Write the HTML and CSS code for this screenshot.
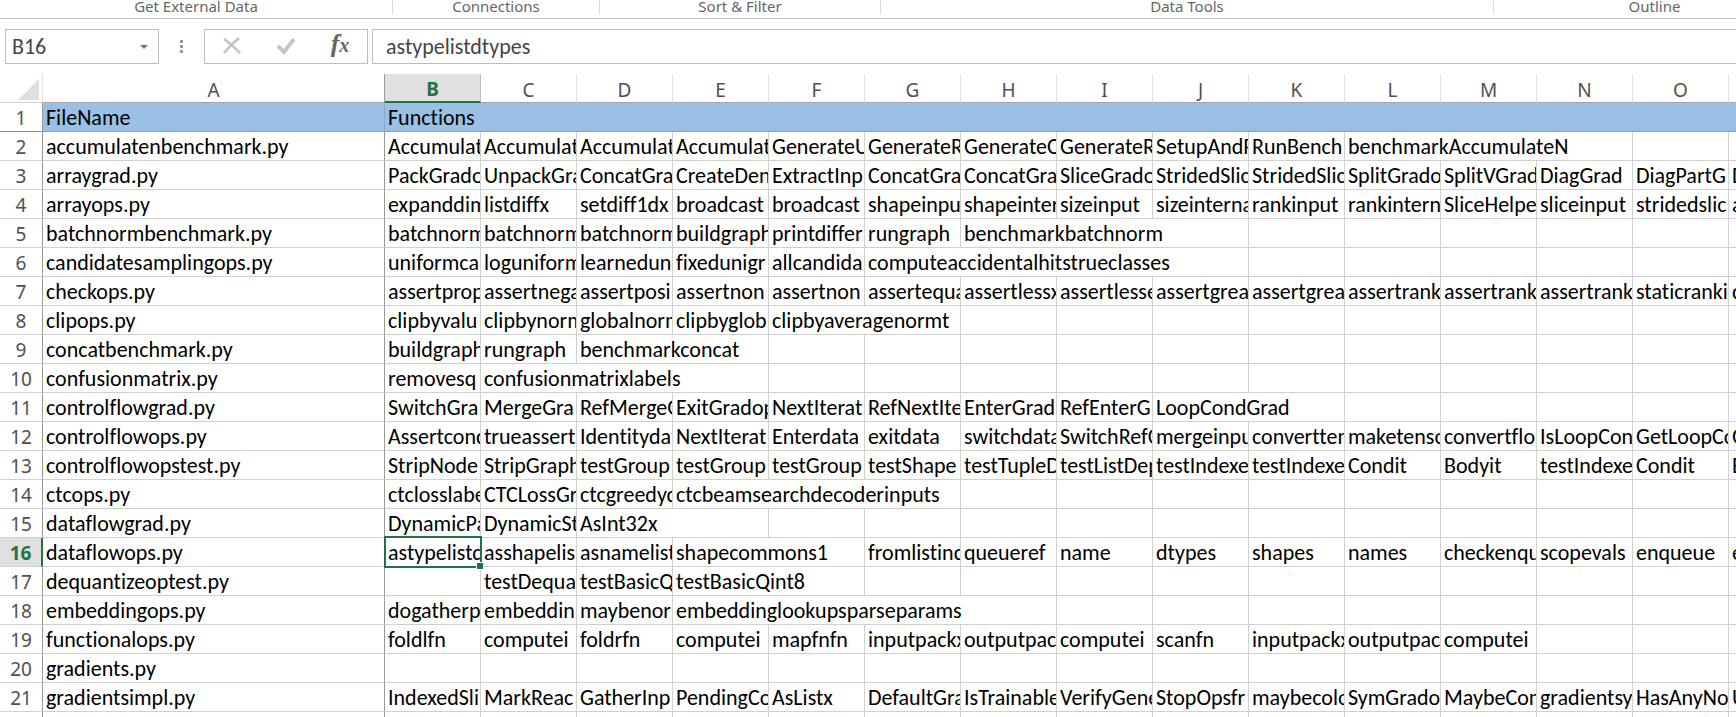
FILE: index.html
```
<!DOCTYPE html>
<html lang="en">
<head>
<meta charset="utf-8">
<title>Workbook</title>
<link rel="stylesheet" href="styles.css">
</head>
<body>
<header class="ribbon">
  <div class="group external">Get External Data</div>
  <div class="group connections">Connections</div>
  <div class="group sort">Sort &amp; Filter</div>
  <div class="group tools">Data Tools</div>
  <div class="group outline">Outline</div>
</header>

<div class="formula-bar">
  <div class="name-box">
    <input class="name-input" type="text" value="B16" aria-label="Name box">
    <button class="name-arrow" type="button" aria-label="Show names"><svg width="8" height="4" viewBox="0 0 8 4"><path d="M0 0h8L4 4z" fill="#777"/></svg></button>
  </div>
  <svg class="grip" width="4" height="14" viewBox="0 0 4 14" fill="#999"><path d="M0 0h3v3H0zM0 5h3v3H0zM0 10h3v3H0z"/></svg>
  <div class="actions">
    <button type="button" aria-label="Cancel"><svg width="20" height="20" viewBox="0 0 20 20" fill="none" stroke="#c3c3c3" stroke-width="2.6"><path d="M2 2c5 3 10 8 16 14M17 1C12 5 7 10 2 16"/></svg></button>
    <button type="button" aria-label="Enter"><svg width="20" height="20" viewBox="0 0 20 20" fill="none" stroke="#c6c6c6" stroke-width="4"><path d="M2 9l6 6L18 2"/></svg></button>
    <button type="button" class="fx" aria-label="Insert function"><i class="fx-f">f</i><i class="fx-x">x</i></button>
  </div>
  <input class="formula" type="text" value="astypelistdtypes" aria-label="Formula bar">
</div>

<main class="sheet">
<table class="grid">
<colgroup><col class="col-num"><col class="col-a"><col span="14" class="col"><col></colgroup>
<thead>
<tr><th class="corner"><svg width="21" height="21" viewBox="0 0 21 21"><path d="M21 0v21H0z" fill="#dfdfdf"/></svg></th><th class="first">A</th><th class="active">B</th><th>C</th><th>D</th><th>E</th><th>F</th><th>G</th><th>H</th><th>I</th><th>J</th><th>K</th><th>L</th><th>M</th><th>N</th><th>O</th><th></th></tr>
</thead>
<tbody>
<tr class="title"><th>1</th><td class="file">FileName</td><td colspan="15">Functions</td></tr>
<tr><th>2</th><td class="file">accumulatenbenchmark.py</td><td>AccumulateN</td><td>AccumulateN</td><td>AccumulateN</td><td>AccumulateN</td><td>GenerateUn</td><td>GenerateRa</td><td>GenerateOr</td><td>GenerateRe</td><td>SetupAndRun</td><td>RunBench</td><td colspan="3">benchmarkAccumulateN</td><td></td><td></td></tr>
<tr><th>3</th><td class="file">arraygrad.py</td><td>PackGradop</td><td>UnpackGrad</td><td>ConcatGrad</td><td>CreateDense</td><td>ExtractInp</td><td>ConcatGrad</td><td>ConcatGrad</td><td>SliceGradop</td><td>StridedSlice</td><td>StridedSlice</td><td>SplitGradop</td><td>SplitVGrad</td><td>DiagGrad</td><td>DiagPartG</td><td>Diag</td></tr>
<tr><th>4</th><td class="file">arrayops.py</td><td>expanddims</td><td>listdiffx</td><td>setdiff1dx</td><td>broadcast</td><td>broadcast</td><td>shapeinput</td><td>shapeinter</td><td>sizeinput</td><td>sizeinternal</td><td>rankinput</td><td>rankinternal</td><td>SliceHelpe</td><td>sliceinput</td><td>stridedslic</td><td>assign</td></tr>
<tr><th>5</th><td class="file">batchnormbenchmark.py</td><td>batchnorm</td><td>batchnorm</td><td>batchnorm</td><td>buildgraph</td><td>printdiffer</td><td>rungraph</td><td colspan="3">benchmarkbatchnorm</td><td></td><td></td><td></td><td></td><td></td><td></td></tr>
<tr><th>6</th><td class="file">candidatesamplingops.py</td><td>uniformca</td><td>loguniform</td><td>learnedun</td><td>fixedunigr</td><td>allcandida</td><td colspan="4">computeaccidentalhitstrueclasses</td><td></td><td></td><td></td><td></td><td></td><td></td></tr>
<tr><th>7</th><td class="file">checkops.py</td><td>assertprope</td><td>assertnegat</td><td>assertposi</td><td>assertnon</td><td>assertnon</td><td>assertequal</td><td>assertlessx</td><td>assertlesseq</td><td>assertgrea</td><td>assertgrea</td><td>assertrank</td><td>assertrank</td><td>assertrank</td><td>staticranki</td><td>dynamic</td></tr>
<tr><th>8</th><td class="file">clipops.py</td><td>clipbyvalu</td><td>clipbynorm</td><td>globalnorm</td><td>clipbyglob</td><td colspan="2">clipbyaveragenormt</td><td></td><td></td><td></td><td></td><td></td><td></td><td></td><td></td><td></td></tr>
<tr><th>9</th><td class="file">concatbenchmark.py</td><td>buildgraph</td><td>rungraph</td><td colspan="2">benchmarkconcat</td><td></td><td></td><td></td><td></td><td></td><td></td><td></td><td></td><td></td><td></td><td></td></tr>
<tr><th>10</th><td class="file">confusionmatrix.py</td><td>removesq</td><td colspan="3">confusionmatrixlabels</td><td></td><td></td><td></td><td></td><td></td><td></td><td></td><td></td><td></td><td></td><td></td></tr>
<tr><th>11</th><td class="file">controlflowgrad.py</td><td>SwitchGra</td><td>MergeGra</td><td>RefMergeGr</td><td>ExitGradop</td><td>NextIterat</td><td>RefNextIter</td><td>EnterGrad</td><td>RefEnterG</td><td colspan="2">LoopCondGrad</td><td></td><td></td><td></td><td></td><td></td></tr>
<tr><th>12</th><td class="file">controlflowops.py</td><td>Assertcond</td><td>trueassert</td><td>Identityda</td><td>NextIterat</td><td>Enterdata</td><td>exitdata</td><td>switchdata</td><td>SwitchRefO</td><td>mergeinput</td><td>converttens</td><td>maketensor</td><td>convertflo</td><td>IsLoopCons</td><td>GetLoopCon</td><td>Get</td></tr>
<tr><th>13</th><td class="file">controlflowopstest.py</td><td>StripNode</td><td>StripGraph</td><td>testGroup</td><td>testGroup</td><td>testGroup</td><td>testShape</td><td>testTupleDe</td><td>testListDep</td><td>testIndexe</td><td>testIndexe</td><td>Condit</td><td>Bodyit</td><td>testIndexe</td><td>Condit</td><td>Body</td></tr>
<tr><th>14</th><td class="file">ctcops.py</td><td>ctclosslabel</td><td>CTCLossGra</td><td>ctcgreedyde</td><td colspan="3">ctcbeamsearchdecoderinputs</td><td></td><td></td><td></td><td></td><td></td><td></td><td></td><td></td><td></td></tr>
<tr><th>15</th><td class="file">dataflowgrad.py</td><td>DynamicPar</td><td>DynamicSti</td><td colspan="2">AsInt32x</td><td></td><td></td><td></td><td></td><td></td><td></td><td></td><td></td><td></td><td></td><td></td></tr>
<tr><th class="active">16</th><td class="file">dataflowops.py</td><td class="selected"><div class="clip">astypelistdtypes</div><span class="frame"></span><span class="handle"></span></td><td>asshapelis</td><td>asnamelist</td><td colspan="2">shapecommons1</td><td>fromlistind</td><td>queueref</td><td>name</td><td>dtypes</td><td>shapes</td><td>names</td><td>checkenque</td><td>scopevals</td><td>enqueue</td><td>enq</td></tr>
<tr><th>17</th><td class="file">dequantizeoptest.py</td><td></td><td>testDequa</td><td>testBasicQu</td><td colspan="2">testBasicQint8</td><td></td><td></td><td></td><td></td><td></td><td></td><td></td><td></td><td></td><td></td></tr>
<tr><th>18</th><td class="file">embeddingops.py</td><td>dogatherpa</td><td>embeddin</td><td>maybenorm</td><td colspan="4">embeddinglookupsparseparams</td><td></td><td></td><td></td><td></td><td></td><td></td><td></td><td></td></tr>
<tr><th>19</th><td class="file">functionalops.py</td><td>foldlfn</td><td>computei</td><td>foldrfn</td><td>computei</td><td>mapfnfn</td><td>inputpackx</td><td>outputpack</td><td>computei</td><td>scanfn</td><td>inputpackx</td><td>outputpack</td><td>computei</td><td></td><td></td><td></td></tr>
<tr><th>20</th><td class="file">gradients.py</td><td></td><td></td><td></td><td></td><td></td><td></td><td></td><td></td><td></td><td></td><td></td><td></td><td></td><td></td><td></td></tr>
<tr><th>21</th><td class="file">gradientsimpl.py</td><td>IndexedSli</td><td>MarkReac</td><td>GatherInp</td><td>PendingCou</td><td>AsListx</td><td>DefaultGrad</td><td>IsTrainable</td><td>VerifyGene</td><td>StopOpsfr</td><td>maybecoloc</td><td>SymGrado</td><td>MaybeCom</td><td>gradientsy</td><td>HasAnyNo</td><td>Upd</td></tr>
<tr><th></th><td class="file"></td><td></td><td></td><td></td><td></td><td></td><td></td><td></td><td></td><td></td><td></td><td></td><td></td><td></td><td></td><td></td></tr>
</tbody>
</table>
</main>
</body>
</html>
```
FILE: styles.css
```
* { box-sizing: border-box; }

html, body { height: 100%; }

body {
  margin: 0;
  display: flex;
  flex-direction: column;
  overflow: hidden;
  background: #fff;
  font-family: "Noto Sans", sans-serif;
  font-variant-ligatures: none;
}

button { padding: 0; border: 0; background: none; }

/* Ribbon group captions */
.ribbon {
  display: flex;
  flex: none;
  height: 19px;
  padding-bottom: 4px;
  border-bottom: 1px solid #c8c8c8;
}
.group {
  flex: none;
  border-right: 1px solid #dcdcdc;
  color: #666;
  font-size: 15px;
  line-height: 12px;
  text-align: center;
}
.external { width: 393px; }
.connections { width: 207px; }
.sort { width: 281px; }
.tools { width: 613px; }
.outline { width: 322px; }

/* Name box and formula bar */
.formula-bar {
  display: flex;
  flex: none;
  align-items: center;
  padding: 10px 0 10px 5px;
}
.name-box {
  display: flex;
  align-items: center;
  width: 154px;
  height: 35px;
  border: 1px solid #bdbdbd;
}
.name-input,
.formula {
  min-width: 0;
  border: 0;
  outline: 0;
  background: none;
  color: #444;
  font: 22px Calibri, Carlito, Lato, sans-serif;
  font-variant-ligatures: none;
}
.name-input { flex: 1; padding: 0 0 0 6px; }
.name-arrow { display: flex; padding: 0 10px; }
.grip { margin: 0 20px 0 21px; }
.actions {
  display: flex;
  align-items: center;
  justify-content: space-around;
  width: 164px;
  height: 35px;
  margin-right: 4px;
  border: 1px solid #bdbdbd;
}
.actions button { display: flex; width: 20px; justify-content: center; }
.actions .fx {
  align-items: baseline;
  padding-bottom: 4px;
  color: #666;
  font: 26px/24px "Liberation Serif", serif;
}
.fx-f { font-weight: 700; }
.fx-x { font-size: 20px; font-weight: 700; }
.formula {
  flex: 1;
  height: 35px;
  padding: 0 13px;
  border: 1px solid #bdbdbd;
  border-right: 0;
}

/* Worksheet */
.sheet { flex: 1; min-height: 0; overflow: hidden; }
.grid {
  width: 100%;
  table-layout: fixed;
  border-collapse: separate;
  border-spacing: 0;
}
.col-num { width: 43px; }
.col-a { width: 342px; }
.col { width: 96px; }

th, td {
  height: 29px;
  padding: 2px 0 0;
  overflow: hidden;
  border-right: 1px solid #d0d0d0;
  border-bottom: 1px solid #d0d0d0;
  line-height: 26px;
  white-space: nowrap;
}
th {
  color: #505050;
  font-size: 19px;
  font-weight: 400;
}
td {
  padding-left: 3px;
  color: #000;
  font-family: Calibri, Carlito, Lato, sans-serif;
  font-size: 22px;
  text-align: left;
}
thead th {
  padding-top: 4px;
  border-right-color: #e0e0e0;
  border-bottom-color: #a6a6a6;
  line-height: 24px;
}
thead .first { border-right-color: #999; }
thead .active {
  border-right-color: #bdbdbd;
  border-bottom: 2px solid #217346;
  line-height: 23px;
}
thead .corner { border-bottom-color: #d0d0d0; padding-top: 3px; }
.corner svg { display: block; margin: 0 0 0 18px; }
tbody th { border-right-color: #999; }
tbody .active { border-right: 2px solid #217346; }
.active {
  background: #e0e0e0;
  color: #217346;
  font-weight: 700;
}
.file { border-right-color: #999; }
.title th { border-bottom-color: #8c8c8c; }
.title td { border-bottom-color: #8c9bac; background: #9bc0e6; }
.title .file { border-right-color: #8ba8c6; }
th:last-child, td:last-child { border-right: 0; }

/* Active cell outline and fill handle */
.selected { position: relative; overflow: visible; }
.clip { overflow: hidden; }
.frame {
  position: absolute;
  inset: -2px -2px -2px -1px;
  border: 2px solid #217346;
}
.handle {
  position: absolute;
  right: -4px;
  bottom: -4px;
  width: 8px;
  height: 8px;
  border: 1px solid #fff;
  background: #217346;
}
```
